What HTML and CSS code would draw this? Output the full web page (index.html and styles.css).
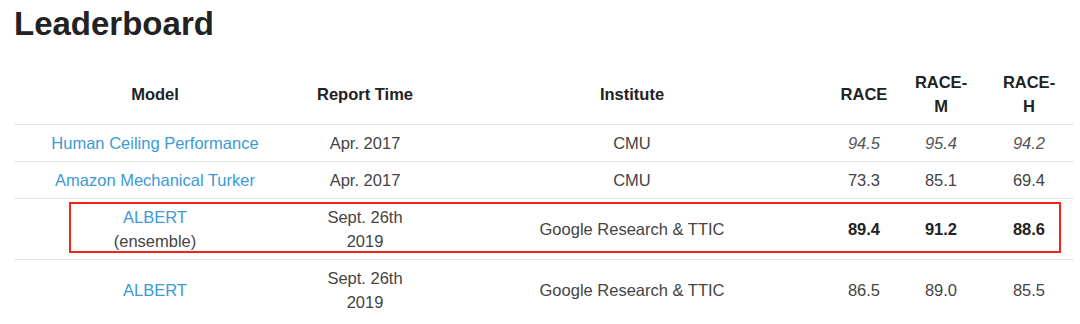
FILE: index.html
```html
<!DOCTYPE html>
<html>
<head>
<meta charset="utf-8">
<link rel="stylesheet" href="styles.css">
</head>
<body>
<div class="page">
  <h1 class="title">Leaderboard</h1>
  <div class="board">
    <table class="lb">
      <colgroup>
        <col class="c-model"><col class="c-time"><col class="c-inst"><col class="c-race"><col class="c-racem"><col class="c-raceh">
      </colgroup>
      <thead>
        <tr>
          <th>Model</th>
          <th>Report Time</th>
          <th>Institute</th>
          <th>RACE</th>
          <th>RACE-<br>M</th>
          <th>RACE-<br>H</th>
        </tr>
      </thead>
      <tbody>
        <tr>
          <td><a class="link" href="#">Human Ceiling Performance</a></td>
          <td>Apr. 2017</td>
          <td>CMU</td>
          <td class="it">94.5</td>
          <td class="it">95.4</td>
          <td class="it">94.2</td>
        </tr>
        <tr>
          <td><a class="link" href="#">Amazon Mechanical Turker</a></td>
          <td>Apr. 2017</td>
          <td>CMU</td>
          <td>73.3</td>
          <td>85.1</td>
          <td>69.4</td>
        </tr>
        <tr>
          <td><a class="link" href="#">ALBERT</a><br>(ensemble)</td>
          <td>Sept. 26th<br>2019</td>
          <td>Google Research &amp; TTIC</td>
          <td class="b">89.4</td>
          <td class="b">91.2</td>
          <td class="b">88.6</td>
        </tr>
        <tr>
          <td><a class="link" href="#">ALBERT</a></td>
          <td>Sept. 26th<br>2019</td>
          <td>Google Research &amp; TTIC</td>
          <td>86.5</td>
          <td>89.0</td>
          <td>85.5</td>
        </tr>
      </tbody>
    </table>
    <div class="highlight"></div>
  </div>
</div>
</body>
</html>
```

FILE: styles.css
```css
html, body {
  margin: 0;
  padding: 0;
  background: #ffffff;
}

body {
  font-family: "Liberation Sans", Arial, Helvetica, sans-serif;
  color: #444444;
}

.page {
  padding: 4px 7px 0 14px;
}

.title {
  margin: 0;
  font-size: 33px;
  line-height: 40px;
  font-weight: bold;
  color: #222222;
}

.board {
  position: relative;
  margin-top: 20px;
}

.lb {
  width: 1060px;
  border-collapse: collapse;
  table-layout: fixed;
  font-size: 16.5px;
  line-height: 24px;
}

.c-model { width: 282px; }
.c-time { width: 138px; }
.c-inst { width: 396px; }
.c-race { width: 68px; }
.c-racem { width: 86px; }
.c-raceh { width: 90px; }

.lb th,
.lb td {
  padding: 6px 0;
  text-align: center;
  vertical-align: middle;
  white-space: nowrap;
}

.lb th {
  font-weight: bold;
  color: #222222;
}

.lb td {
  border-top: 1px solid #e3e3e3;
}

.lb td.it {
  font-style: italic;
  color: #555555;
}

.lb td.b {
  font-weight: bold;
  color: #222222;
}

.link {
  color: #3c9ad6;
  text-decoration: none;
}

.highlight {
  position: absolute;
  left: 55px;
  top: 138px;
  width: 992px;
  height: 51px;
  box-sizing: border-box;
  border: 2px solid #f2231a;
  pointer-events: none;
}
```
